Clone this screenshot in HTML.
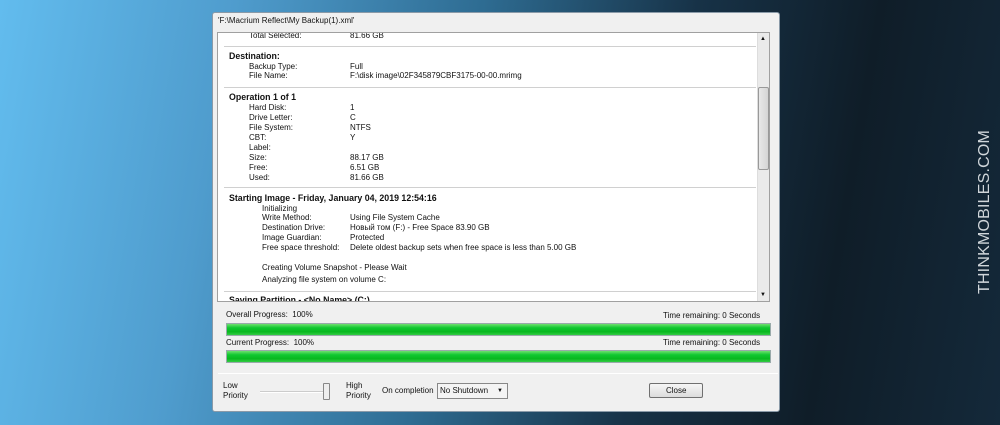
<!DOCTYPE html>
<html><head><meta charset="utf-8"><style>
*{margin:0;padding:0;box-sizing:border-box}
body{width:1000px;height:425px;overflow:hidden;position:relative;font-family:"Liberation Sans",Tahoma,sans-serif;font-size:8px;color:#111;
background:linear-gradient(100deg,#62bcee 0%,#4f9ccd 22%,#2e6c92 45%,#173247 65%,#0f1d28 82%,#14293a 100%)}
.a{position:absolute;white-space:nowrap;line-height:10px}
.b{font-weight:bold;font-size:8.8px}
.win{position:absolute;left:212px;top:12px;width:568px;height:400px;background:#f0f0f0;border:1px solid #8a9aa8;border-radius:3px}
.box{position:absolute;left:217px;top:32px;width:553px;height:270px;background:#fff;border:1px solid #a0a0a0;overflow:hidden}
.sep{position:absolute;left:224px;width:532px;height:1px;background:#d0d0d0}
.bar{position:absolute;left:226px;width:545px;height:13px;border:1px solid #9aa;background:linear-gradient(#6fe06f,#10c830 35%,#08b81f 70%,#33cc44)}
</style></head><body>
<div class="win"></div>
<div class="a" style="left:218px;top:16px">'F:\Macrium Reflect\My Backup(1).xml'</div>
<div class="box"></div>
<div style="position:absolute;left:757px;top:33px;width:12px;height:268px;background:#eaeaea;border-left:1px solid #ddd"></div>
<div style="position:absolute;left:758px;top:87px;width:11px;height:83px;background:linear-gradient(90deg,#e8e8e8,#d4d4d4);border:1px solid #999;border-radius:2px"></div>
<div class="a" style="left:760px;top:34px;font-size:6px">▲</div>
<div class="a" style="left:760px;top:290px;font-size:6px">▼</div>
<div style="position:absolute;left:218px;top:33px;width:538px;height:268px;overflow:hidden">
<div class="a" style="left:31px;top:-2px">Total Selected:</div><div class="a" style="left:132px;top:-2px">81.66 GB</div>
</div>
<div class="sep" style="top:46px"></div>
<div class="a b" style="left:229px;top:51px">Destination:</div>
<div class="a" style="left:249px;top:62px">Backup Type:</div><div class="a" style="left:350px;top:62px">Full</div>
<div class="a" style="left:249px;top:71px">File Name:</div><div class="a" style="left:350px;top:71px">F:\disk image\02F345879CBF3175-00-00.mrimg</div>
<div class="sep" style="top:87px"></div>
<div class="a b" style="left:229px;top:92px">Operation 1 of 1</div>
<div class="a" style="left:249px;top:103px">Hard Disk:<br>Drive Letter:<br>File System:<br>CBT:<br>Label:</div>
<div class="a" style="left:350px;top:103px">1<br>C<br>NTFS<br>Y</div>
<div class="a" style="left:249px;top:153px">Size:<br>Free:<br>Used:</div>
<div class="a" style="left:350px;top:153px">88.17 GB<br>6.51 GB<br>81.66 GB</div>
<div class="sep" style="top:187px"></div>
<div class="a b" style="left:229px;top:193px">Starting Image - Friday, January 04, 2019 12:54:16</div>
<div class="a" style="left:262px;top:204px">Initializing</div>
<div class="a" style="left:262px;top:213px">Write Method:<br>Destination Drive:<br>Image Guardian:<br>Free space threshold:</div>
<div class="a" style="left:350px;top:213px">Using File System Cache<br>Новый том (F:) - Free Space 83.90 GB<br>Protected<br>Delete oldest backup sets when free space is less than 5.00 GB</div>
<div class="a" style="left:262px;top:263px">Creating Volume Snapshot - Please Wait</div>
<div class="a" style="left:262px;top:275px">Analyzing file system on volume C:</div>
<div class="sep" style="top:291px"></div>
<div style="position:absolute;left:218px;top:293px;width:538px;height:8px;overflow:hidden"><div class="a b" style="left:11px;top:2px">Saving Partition - &lt;No Name&gt; (C:)</div></div>
<div class="a" style="left:226px;top:310px">Overall Progress:&nbsp; 100%</div>
<div class="a" style="left:663px;top:311px">Time remaining: 0 Seconds</div>
<div class="bar" style="top:323px"></div>
<div class="a" style="left:226px;top:338px">Current Progress:&nbsp; 100%</div>
<div class="a" style="left:663px;top:338px">Time remaining: 0 Seconds</div>
<div class="bar" style="top:350px"></div>
<div style="position:absolute;left:218px;top:373px;width:560px;height:1px;background:#c8c8c8;border-bottom:1px solid #fff"></div>
<div class="a" style="left:223px;top:381px">Low<br>Priority</div>
<div style="position:absolute;left:260px;top:391px;width:70px;height:2px;background:#ccc;border-bottom:1px solid #fff"></div>
<div style="position:absolute;left:323px;top:383px;width:7px;height:17px;background:#eee;border:1px solid #888;border-radius:1px"></div>
<div class="a" style="left:346px;top:381px">High<br>Priority</div>
<div class="a" style="left:382px;top:386px">On completion</div>
<div style="position:absolute;left:437px;top:383px;width:71px;height:16px;background:#f4f4f4;border:1px solid #888"></div>
<div class="a" style="left:440px;top:386px">No Shutdown</div>
<div class="a" style="left:497px;top:386px;font-size:6px">▼</div>
<div style="position:absolute;left:649px;top:383px;width:54px;height:15px;background:linear-gradient(#f6f6f6,#dcdcdc);border:1px solid #707070;border-radius:2px"></div>
<div class="a" style="left:666px;top:386px">Close</div>
<div class="a" style="top:212px;transform:translate(-50%,-50%) rotate(-90deg);left:985px;color:#d0d6da;font-size:16px;letter-spacing:0.2px">THINKMOBILES.COM</div>
</body></html>
